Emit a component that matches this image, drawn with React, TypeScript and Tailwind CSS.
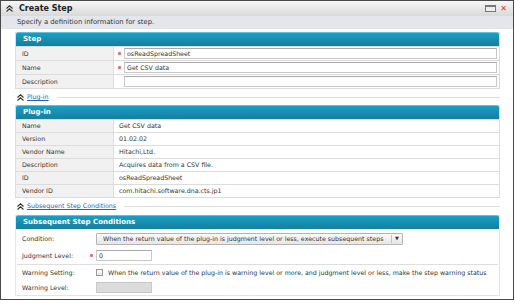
const font = "font-['DejaVu_Sans',Verdana,sans-serif]";

function Collapse() {
  return (
    <svg width="7" height="7" viewBox="0 0 7 7" className="shrink-0">
      <polyline points="0.5,3.5 3.5,0.8 6.5,3.5" fill="none" stroke="#333" strokeWidth="1.1" />
      <polyline points="0.5,6.5 3.5,3.8 6.5,6.5" fill="none" stroke="#333" strokeWidth="1.1" />
    </svg>
  );
}

function Star() {
  return (
    <span className="w-[5px] flex items-center">
      <span className="w-[3px] h-[3px] rounded-[1px] bg-[#ec6a7a]" />
    </span>
  );
}

function SectionHeader({ title }: { title: string }) {
  return (
    <div className="h-[14px] flex items-center pl-[7px] rounded-t-[2px] border-t border-[#5fc0dc] bg-gradient-to-b from-[#1a9ec4] to-[#157f9e] text-white font-bold text-[7px]">
      {title}
    </div>
  );
}

function LinkRow({ label }: { label: string }) {
  return (
    <div className="h-[10px] flex items-center gap-[3px] pl-[2px]">
      <Collapse />
      <span className="text-[#2a5fb8] underline">{label}</span>
      <div className="flex-1 h-px bg-[#dedede] ml-[5px]" />
    </div>
  );
}

const plugRows = [
  ["Name", "Get CSV data"],
  ["Version", "01.02.02"],
  ["Vendor Name", "Hitachi,Ltd."],
  ["Description", "Acquires data from a CSV file."],
  ["ID", "osReadSpreadSheet"],
  ["Vendor ID", "com.hitachi.software.dna.cts.jp1"],
];

const stepRows = [
  ["ID", "osReadSpreadSheet", true],
  ["Name", "Get CSV data", true],
  ["Description", "", false],
] as const;

export default function App() {
  return (
    <div className={`${font} w-[515px] h-[304px] bg-white text-[#333] text-[6.3px]`}>
      <div className="w-[514px] h-[300px] border border-[#4a4a4a] flex flex-col bg-white">
        <div className="h-[15px] flex items-center pl-[5px] pr-[6px] bg-gradient-to-b from-[#f6f6f6] to-[#d9d9d9]">
          <Collapse />
          <span className="ml-[6px] font-bold text-[8px] text-[#222]">Create Step</span>
          <div className="flex-1" />
          <div className="w-[11px] h-[7px] border border-[#777] border-t-2 bg-[#eee] mr-[4px]" />
          <span className="text-[#e03030] font-bold text-[8px] leading-none">✕</span>
        </div>
        <div className="h-[13px] flex items-center pl-[16px] bg-[#e3e6eb] text-[6.8px]">
          Specify a definition information for step.
        </div>
        <div className="flex flex-col pl-[14px] pr-[13px] pt-[3px]">
          <div className="border-x border-b border-[#dcdcdc]">
            <SectionHeader title="Step" />
            {stepRows.map(([label, value, req]) => (
              <div key={label} className="flex h-[14px] border-t border-[#dcdcdc]">
                <div className="w-[98px] bg-[#f1f1f1] pl-[6px] flex items-center border-r border-[#dcdcdc]">{label}</div>
                <div className="flex-1 flex items-center pl-[4px] pr-[2px]">
                  {req ? <Star /> : <span className="w-[5px]" />}
                  <div className="flex-1 h-[11px] border border-[#c8c8c8] border-t-[#aaa] flex items-center pl-[2px] ml-[1px]">
                    {value}
                  </div>
                </div>
              </div>
            ))}
          </div>
          <div className="mt-[3px]">
            <LinkRow label="Plug-in" />
          </div>
          <div className="mt-[3px] border-x border-b border-[#dcdcdc]">
            <SectionHeader title="Plug-in" />
            {plugRows.map(([label, value]) => (
              <div key={label} className="flex h-[13px] border-t border-[#dcdcdc]">
                <div className="w-[98px] bg-[#f1f1f1] pl-[6px] flex items-center border-r border-[#dcdcdc]">{label}</div>
                <div className="flex-1 flex items-center pl-[5px]">{value}</div>
              </div>
            ))}
          </div>
          <div className="mt-[3px]">
            <LinkRow label="Subsequent Step Conditions" />
          </div>
          <div className="mt-[4px] border-x border-b border-[#e4e4e4] flex flex-col">
            <SectionHeader title="Subsequent Step Conditions" />
            <div className="h-[19px] flex items-center pl-[6px]">
              <div className="w-[74px]">Condition:</div>
              <div className="w-[307px] h-[12px] flex items-center border border-[#b5b5b5] rounded-[1px] bg-gradient-to-b from-[#fafafa] to-[#e6e6e6]">
                <span className="flex-1 pl-[6px] whitespace-nowrap">When the return value of the plug-in is judgment level or less, execute subsequent steps</span>
                <span className="w-px h-[8px] bg-[#c4c4c4]" />
                <span className="w-[10px] text-center text-[5px] text-[#333]">▼</span>
              </div>
            </div>
            <div className="h-[15px] flex items-center pl-[6px]">
              <div className="w-[68px] text-[#333]">Judgment Level:</div>
              <Star />
              <div className="ml-[1px] w-[56px] h-[11px] border border-[#c8c8c8] border-t-[#aaa] flex items-center pl-[2px]">0</div>
            </div>
            <div className="mx-[1px] h-px bg-[#dedede] mt-[1px]" />
            <div className="h-[15px] flex items-center pl-[6px]">
              <div className="w-[74px]">Warning Setting:</div>
              <div className="w-[7px] h-[7px] border border-[#999] bg-gradient-to-b from-white to-[#e6e6e6] mr-[5px]" />
              <span className="whitespace-nowrap">When the return value of the plug-in is warning level or more, and judgment level or less, make the step warning status</span>
            </div>
            <div className="h-[15px] flex items-center pl-[6px]">
              <div className="w-[74px]">Warning Level:</div>
              <div className="w-[56px] h-[11px] border border-[#c8c8c8] bg-[#dcdcdc]" />
            </div>
          </div>
        </div>
      </div>
    </div>
  );
}
